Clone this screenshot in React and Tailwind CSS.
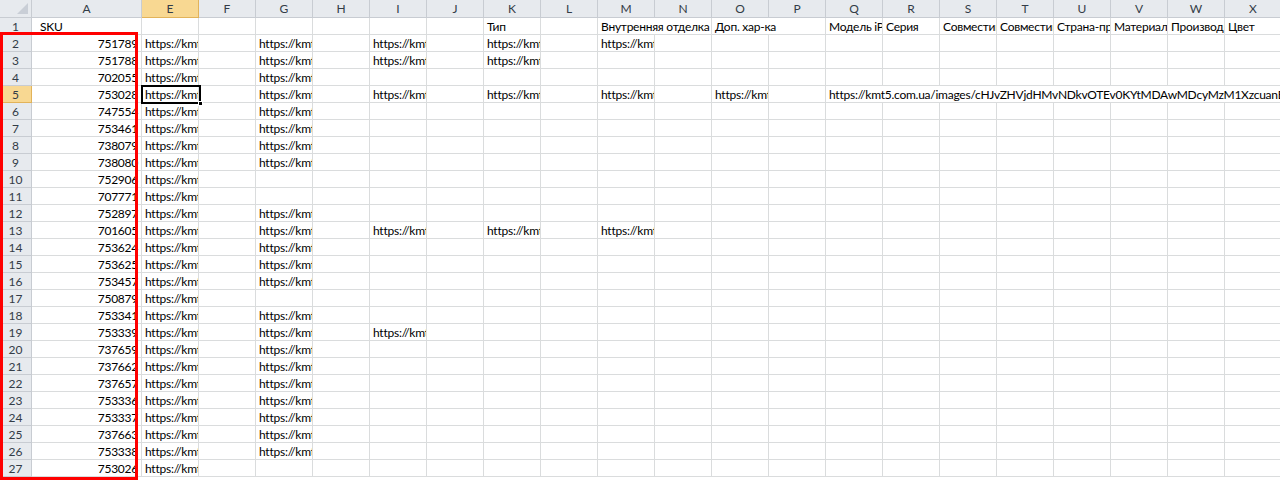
import React from 'react';

const COLS = ['A', 'E', 'F', 'G', 'H', 'I', 'J', 'K', 'L', 'M', 'N', 'O', 'P', 'Q', 'R', 'S', 'T', 'U', 'V', 'W', 'X'];
const URL = 'https://kmt5.com.ua/images/cHJvZHVjdHMvNDkvOTEv0KYtMDAwMDcyMzM1XzcuanBn';

const HEAD = {
  A: 'SKU',
  K: 'Тип',
  M: 'Внутренняя отделка',
  O: 'Доп. хар-ка',
  Q: 'Модель iPhone',
  R: 'Серия',
  S: 'Совместимость',
  T: 'Совместимость',
  U: 'Страна-производитель',
  V: 'Материал',
  W: 'Производитель',
  X: 'Цвет',
};

// sku, filled columns
const ROWS = [
  ['751789', 'EGIKM'],
  ['751788', 'EGIK'],
  ['702055', 'EG'],
  ['753028', 'EGIKMOQ'],
  ['747554', 'EG'],
  ['753461', 'EG'],
  ['738079', 'EG'],
  ['738080', 'EG'],
  ['752906', 'E'],
  ['707771', 'E'],
  ['752897', 'EG'],
  ['701605', 'EGIKM'],
  ['753624', 'EG'],
  ['753625', 'EG'],
  ['753457', 'EG'],
  ['750879', 'E'],
  ['753341', 'EG'],
  ['753339', 'EGI'],
  ['737659', 'EG'],
  ['737662', 'EG'],
  ['737657', 'EG'],
  ['753336', 'EG'],
  ['753337', 'EG'],
  ['737663', 'EG'],
  ['753338', 'EG'],
  ['753026', 'E'],
];

const cellBase =
  'shrink-0 h-[17px] border-r border-b border-[#dadcdd] overflow-hidden whitespace-nowrap leading-[17px] text-black tracking-[-0.25px]';

const RowHead = ({ n, active }) => (
  <div
    className={`shrink-0 w-[32px] h-[17px] border-r border-b text-center leading-[17px] text-[#333c47] ${
      active ? 'bg-[#f8d892] border-[#e2b35a]' : 'bg-[#e7eaee] border-[#c8ccd2]'
    }`}
  >
    {n}
  </div>
);

const Cell = ({ col, text, span = 1, right = false, extra = '' }) => {
  const w = col === 'A' ? 'w-[110px]' : span === 2 ? 'w-[114px]' : span === 8 ? 'w-[456px]' : 'w-[57px]';
  return (
    <div className={`${cellBase} ${w} ${right ? 'text-right pr-[3px]' : 'pl-[3px]'} ${extra}`}>{text}</div>
  );
};

const HeaderRow = () => (
  <div className="flex">
    <RowHead n={1} />
    {COLS.map((c) => {
      if (c === 'N' || c === 'P') return null;
      const span = c === 'M' || c === 'O' ? 2 : 1;
      return <Cell key={c} col={c} text={HEAD[c] || ''} span={span} extra={c === 'A' ? 'pl-[8px]' : ''} />;
    })}
  </div>
);

const DataRow = ({ n, sku, filled }) => {
  const long = filled.includes('Q');
  const cells = [];
  for (const c of COLS) {
    if (long && ['R', 'S', 'T', 'U', 'V', 'W', 'X'].includes(c)) continue;
    if (c === 'A') {
      cells.push(<Cell key={c} col={c} text={sku} right />);
    } else if (c === 'Q' && long) {
      cells.push(<Cell key={c} col={c} text={URL} span={8} />);
    } else {
      cells.push(<Cell key={c} col={c} text={filled.includes(c) ? 'https://kmt5.com.ua/images' : ''} />);
    }
  }
  return (
    <div className="flex">
      <RowHead n={n} active={n === 5} />
      {cells}
    </div>
  );
};

export default function App() {
  return (
    <div
      className="relative w-[1280px] h-[481px] overflow-hidden bg-white text-[12px]"
      style={{ fontFamily: 'Lato, "Liberation Sans", sans-serif' }}
    >
      {/* column headers */}
      <div className="flex h-[18px]">
        <div className="shrink-0 w-[32px] h-[18px] border-r border-b border-[#c8ccd2] bg-[#e7eaee] flex items-end justify-end p-[3px]">
          <svg width="11" height="11" viewBox="0 0 11 11">
            <polygon points="11,0 11,11 0,11" fill="#c9ced6" />
          </svg>
        </div>
        {COLS.map((c) => (
          <div
            key={c}
            className={`shrink-0 h-[18px] border-r border-b text-center leading-[17px] text-[#333c47] ${
              c === 'A' ? 'w-[110px]' : 'w-[57px]'
            } ${c === 'E' ? 'bg-[#f8d892] border-[#e2b35a]' : 'bg-[#e7eaee] border-[#c8ccd2]'}`}
          >
            {c}
          </div>
        ))}
      </div>

      <HeaderRow />
      {ROWS.map(([sku, filled], i) => (
        <DataRow key={sku + i} n={i + 2} sku={sku} filled={filled} />
      ))}

      {/* selected cell E5 */}
      <div className="absolute left-[141px] top-[85px] w-[60px] h-[19px] border-2 border-black pointer-events-none" />
      <div className="absolute left-[198px] top-[101px] w-[5px] h-[5px] bg-black border border-white pointer-events-none" />

      {/* red annotation box */}
      <div className="absolute left-0 top-[32px] w-[138px] h-[448px] border-[3px] border-[#ff0000] pointer-events-none" />
    </div>
  );
}
